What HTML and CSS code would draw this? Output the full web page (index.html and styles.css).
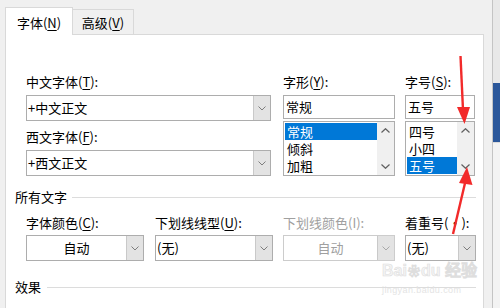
FILE: index.html
```html
<!DOCTYPE html>
<html lang="zh-CN">
<head>
  <meta charset="UTF-8" />
  <title>字体</title>
  <link rel="stylesheet" href="styles.css">
</head>
<body>
  <div class="screen">
    <div class="dialog">
      <div class="tabs">
        <div class="tab active">字体(<u>N</u>)</div>
        <div class="tab">高级(<u>V</u>)</div>
      </div>

      <div class="panel">
        <div class="top">
          <div class="col col-face">
            <div class="label">中文字体(<u>T</u>):</div>
            <div class="combo">
              <span class="value">+中文正文</span>
              <span class="drop"><svg width="8" height="5" viewBox="0 0 8 5"><path d="M0.5 0.5 L4 4 L7.5 0.5" /></svg></span>
            </div>
            <div class="label second">西文字体(<u>F</u>):</div>
            <div class="combo">
              <span class="value">+西文正文</span>
              <span class="drop"><svg width="8" height="5" viewBox="0 0 8 5"><path d="M0.5 0.5 L4 4 L7.5 0.5" /></svg></span>
            </div>
          </div>

          <div class="col col-style">
            <div class="label">字形(<u>Y</u>):</div>
            <div class="input">常规</div>
            <div class="list">
              <div class="rows">
                <div class="row selected">常规</div>
                <div class="row">倾斜</div>
                <div class="row">加粗</div>
              </div>
              <div class="scroll">
                <span class="arrow"><svg width="9" height="5" viewBox="0 0 9 5"><path d="M0.5 4.5 L4.5 0.7 L8.5 4.5" /></svg></span>
                <span class="arrow"><svg width="9" height="5" viewBox="0 0 9 5"><path d="M0.5 0.5 L4.5 4.3 L8.5 0.5" /></svg></span>
              </div>
            </div>
          </div>

          <div class="col col-size">
            <div class="label">字号(<u>S</u>):</div>
            <div class="input">五号</div>
            <div class="list">
              <div class="rows">
                <div class="row">四号</div>
                <div class="row">小四</div>
                <div class="row selected">五号</div>
              </div>
              <div class="scroll">
                <span class="arrow"><svg width="9" height="5" viewBox="0 0 9 5"><path d="M0.5 4.5 L4.5 0.7 L8.5 4.5" /></svg></span>
                <span class="arrow"><svg width="9" height="5" viewBox="0 0 9 5"><path d="M0.5 0.5 L4.5 4.3 L8.5 0.5" /></svg></span>
              </div>
            </div>
          </div>
        </div>

        <div class="section first">所有文字</div>

        <div class="bottom">
          <div class="field f-color">
            <div class="label">字体颜色(<u>C</u>):</div>
            <div class="combo">
              <span class="value center">自动</span>
              <span class="drop"><svg width="8" height="5" viewBox="0 0 8 5"><path d="M0.5 0.5 L4 4 L7.5 0.5" /></svg></span>
            </div>
          </div>
          <div class="field f-under">
            <div class="label">下划线线型(<u>U</u>):</div>
            <div class="combo">
              <span class="value">(无)</span>
              <span class="drop"><svg width="8" height="5" viewBox="0 0 8 5"><path d="M0.5 0.5 L4 4 L7.5 0.5" /></svg></span>
            </div>
          </div>
          <div class="field f-ucolor disabled">
            <div class="label">下划线颜色(I):</div>
            <div class="combo">
              <span class="value center">自动</span>
              <span class="drop"><svg width="8" height="5" viewBox="0 0 8 5"><path d="M0.5 0.5 L4 4 L7.5 0.5" /></svg></span>
            </div>
          </div>
          <div class="field f-emph">
            <div class="label">着重号(·):</div>
            <div class="combo">
              <span class="value">(无)</span>
              <span class="drop"><svg width="8" height="5" viewBox="0 0 8 5"><path d="M0.5 0.5 L4 4 L7.5 0.5" /></svg></span>
            </div>
          </div>
        </div>

        <div class="section second">效果</div>
      </div>
    </div>

    <div class="edge">
      <div class="edge-top"></div>
      <div class="edge-blue"></div>
      <div class="edge-rest"></div>
    </div>

    <div class="watermark">
      <div class="wm-logo">Bai<span class="paw">❀</span>du 经验</div>
      <div class="wm-url">jingyan.baidu.com</div>
    </div>

    <!-- annotation arrows -->
    <svg class="arrows" width="500" height="308" viewBox="0 0 500 308">
      <path d="M460.5 56 L463 110" class="shaft" />
      <polygon points="457,107 470,107 464.5,124" />
      <path d="M453 234 L465.5 181" class="shaft" />
      <polygon points="459,183 472.5,185 467,167" />
    </svg>
  </div>
</body>
</html>
```

FILE: styles.css
```css
body {
  margin: 0;
  background: #f0f0f0;
  font-family: "Noto Sans CJK SC", "Noto Sans", sans-serif;
  font-size: 13px;
  color: #000;
  overflow: hidden;
}

.screen {
  position: relative;
  display: flex;
  width: 500px;
  height: 308px;
  overflow: hidden;
}

.dialog {
  flex: none;
  width: 492px;
  padding: 7px 0 0 5px;
  box-sizing: border-box;
}

u {
  text-decoration-thickness: 1px;
  text-underline-offset: 2px;
}

/* tabs */
.tabs {
  display: flex;
  align-items: flex-end;
  height: 27px;
}

.tab {
  box-sizing: border-box;
  height: 25px;
  width: 61px;
  padding-top: 5px;
  line-height: 16px;
  text-align: center;
  background: #f0f0f0;
  border: 1px solid #d9d9d9;
  border-left: none;
  border-bottom: none;
}

.tab.active {
  position: relative;
  z-index: 1;
  width: 68px;
  height: 28px;
  margin-bottom: -1px;
  padding-top: 7px;
  background: #fff;
  border-left: 1px solid #d9d9d9;
}

.panel {
  box-sizing: border-box;
  width: 479px;
  height: 300px;
  background: #fff;
  border: 1px solid #d9d9d9;
}

.label {
  line-height: 16px;
  height: 16px;
  margin-bottom: 5px;
  white-space: nowrap;
}

/* top block */
.top {
  display: flex;
  padding: 39px 0 0 20px;
}

.col-face {
  width: 245px;
}

.col-face .label.second {
  margin-top: 8px;
}

.col-style {
  width: 112px;
  margin-left: 12px;
}

.col-size {
  width: 70px;
  margin-left: 10px;
}

.combo {
  box-sizing: border-box;
  display: flex;
  height: 26px;
  border: 1px solid #adadad;
  background: #fff;
}

.combo .value {
  flex: 1;
  padding-left: 1px;
  line-height: 24px;
  white-space: nowrap;
  overflow: hidden;
}

.combo .value.center {
  text-align: center;
  padding-left: 0;
}

.combo .drop {
  width: 16px;
  display: flex;
  align-items: center;
  justify-content: center;
  background: #e3e3e3;
  border-left: 1px solid #c9c9c9;
}

.drop svg path {
  fill: none;
  stroke: #7d7d7d;
  stroke-width: 1;
}

.input {
  box-sizing: border-box;
  height: 24px;
  line-height: 22px;
  padding-left: 2px;
  border: 1px solid #adadad;
}

.list {
  box-sizing: border-box;
  display: flex;
  height: 55px;
  margin-top: 2px;
  border: 1px solid #adadad;
}

.rows {
  flex: 1;
  padding: 1px 0 0 1px;
}

.row {
  height: 17px;
  line-height: 17px;
  padding-left: 2px;
  overflow: hidden;
}

.row.selected {
  background: #0078d7;
  color: #fff;
}

.scroll {
  width: 17px;
  display: flex;
  flex-direction: column;
  justify-content: space-between;
  background: #f0f0f0;
}

.scroll .arrow {
  height: 17px;
  display: flex;
  align-items: center;
  justify-content: center;
}

.scroll svg path {
  fill: none;
  stroke: #606060;
  stroke-width: 1.2;
}

/* section headings */
.section {
  display: flex;
  align-items: center;
  line-height: 16px;
  margin: 0 7px 0 9px;
}

.section::after {
  content: "";
  flex: 1;
  height: 1px;
  margin-left: 5px;
  background: #dcdcdc;
}

.section.first {
  margin-top: 13px;
}

.section.second {
  margin-top: 18px;
}

.section.second::after {
  margin-left: 6px;
}

/* bottom row */
.bottom {
  display: flex;
  padding: 10px 0 0 20px;
}

.bottom .label {
  margin-bottom: 4px;
}

.f-color { width: 118px; }
.f-under { width: 118px; margin-left: 11px; }
.f-ucolor { width: 112px; margin-left: 10px; }
.f-emph { width: 71px; margin-left: 10px; }

.disabled .label,
.disabled .value {
  color: #a0a0a0;
}

.disabled .combo {
  border-color: #cccccc;
}

.disabled .drop svg path {
  stroke: #a8a8a8;
}

/* edge of the window behind */
.edge {
  flex: 1;
  display: flex;
  flex-direction: column;
  border-left: 1px solid #c4c4c4;
}

.edge-top {
  height: 83px;
  background: #e8e8e8;
}

.edge-blue {
  height: 59px;
  background: #2b579a;
}

.edge-rest {
  flex: 1;
  background: #f3f3f3;
  border-top: 1px solid #dadada;
}

/* watermark */
.watermark {
  position: absolute;
  left: 382px;
  top: 260px;
  width: 92px;
  color: #f4f4f4;
  font-family: "Liberation Sans", sans-serif;
  pointer-events: none;
}

.wm-logo {
  font-size: 16px;
  font-weight: bold;
  line-height: 22px;
  white-space: nowrap;
  -webkit-text-stroke: 0.6px #dedede;
}

.wm-logo .paw {
  font-size: 12px;
  margin: 0 1px;
}

.wm-url {
  font-size: 9px;
  line-height: 10px;
  margin-top: 2px;
  color: #e4e4e4;
  letter-spacing: 0.4px;
}

/* red arrows */
.arrows {
  position: absolute;
  left: 0;
  top: 0;
  pointer-events: none;
}

.arrows .shaft {
  fill: none;
  stroke: #f22a2a;
  stroke-width: 2.4;
}

.arrows polygon {
  fill: #f22a2a;
}
```
